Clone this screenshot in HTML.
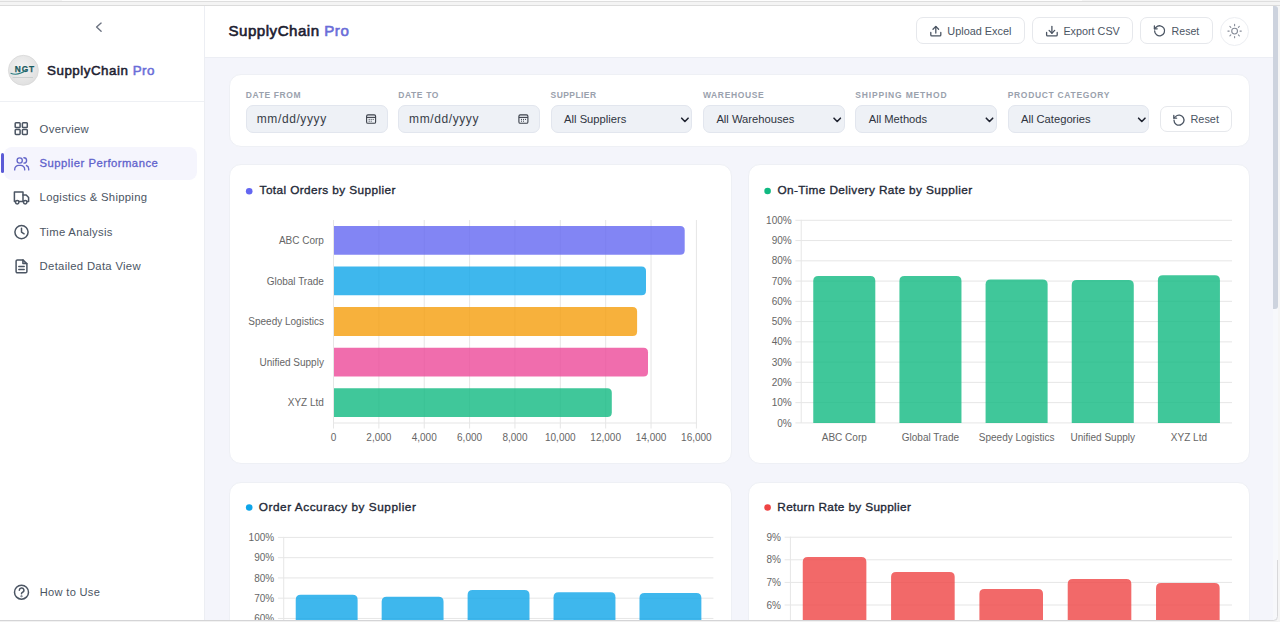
<!DOCTYPE html>
<html><head><meta charset="utf-8">
<style>
*{margin:0;padding:0;box-sizing:border-box}
html,body{width:1280px;height:622px;overflow:hidden;background:#fff}
body{position:relative;font-family:"Liberation Sans",sans-serif;color:#1f2330}
.a{position:absolute}
.t{position:absolute;line-height:1;white-space:nowrap}
svg.o{position:absolute;left:0;top:0;width:1280px;height:622px;overflow:visible}
</style></head><body>
<div class="a" style="left:0px;top:0px;width:1280px;height:6px;background:#f4f4f4;"></div>
<div class="a" style="left:0px;top:5px;width:1280px;height:1px;background:#dcdcdc;"></div>
<div class="a" style="left:0px;top:1px;width:1280px;height:1px;background:#dedede;"></div>
<div class="a" style="left:62px;top:0px;width:1020px;height:1px;background:#fdfdfd;"></div>
<div class="a" style="left:205px;top:57px;width:1068px;height:563px;background:#f4f5fb;"></div>
<div class="a" style="left:0px;top:6px;width:205px;height:614px;background:#fff;border-right:1px solid #eceef3;"></div>
<div class="a" style="left:0px;top:101px;width:204px;height:1px;background:#eef0f4;"></div>
<div class="a" style="left:205px;top:6px;width:1068px;height:52px;background:#fff;border-bottom:1px solid #eceef4;"></div>
<div class="a" style="left:1273px;top:6px;width:7px;height:614px;background:#f7f8fb;"></div>
<div class="a" style="left:1273px;top:6px;width:5px;height:303px;background:#cdd3de;border-radius:0 3px 3px 0;"></div>
<svg class="o"><path d="M101.1 23.1 L96.6 27.1 L101.1 31.2" fill="none" stroke="#6b7280" stroke-width="1.4" stroke-linecap="round" stroke-linejoin="round"/></svg>
<svg class="o"><defs><radialGradient id="lg" cx="0.45" cy="0.4" r="0.6"><stop offset="0" stop-color="#f3f3f3"/><stop offset="1" stop-color="#e0e0e0"/></radialGradient></defs>
<circle cx="23.4" cy="70.3" r="15" fill="url(#lg)" stroke="#d6d6d6" stroke-width="0.7"/>
<text x="14.7" y="72.3" font-family="Liberation Sans" font-weight="700" font-size="8.3" fill="#1b5a5e" textLength="19.5" lengthAdjust="spacing" stroke="#1b5a5e" stroke-width="0.25">NGT</text>
<path d="M10.6 73.2 Q17.5 76.2 25.5 70.6" fill="none" stroke="#2c7d80" stroke-width="1.2"/>
<rect x="12.6" y="77.2" width="20.4" height="0.6" fill="#b9c2c2"/>
</svg>
<div class="t" style="left:47.00px;top:64.06px;font-size:13.4px;color:#1c2030;font-weight:400;letter-spacing:0.5px;-webkit-text-stroke:0.5px #1c2030;">SupplyChain <span style="color:#6a6dd8;-webkit-text-stroke:0.5px #6a6dd8">Pro</span></div>
<div class="a" style="left:3.5px;top:146.5px;width:193px;height:33px;background:#f5f5fd;border-radius:8px;"></div>
<div class="a" style="left:1px;top:153px;width:2.5px;height:20px;background:#5b5bd6;border-radius:2px;"></div>
<div class="t" style="left:39.60px;top:123.73px;font-size:11.3px;color:#4b5563;font-weight:400;letter-spacing:0.3px;">Overview</div>
<div class="t" style="left:39.60px;top:157.73px;font-size:11.3px;color:#5f62cc;font-weight:400;letter-spacing:0.47px;-webkit-text-stroke:0.3px #5f62cc;">Supplier Performance</div>
<div class="t" style="left:39.60px;top:192.33px;font-size:11.3px;color:#4b5563;font-weight:400;letter-spacing:0.3px;">Logistics &amp; Shipping</div>
<div class="t" style="left:39.60px;top:226.73px;font-size:11.3px;color:#4b5563;font-weight:400;letter-spacing:0.3px;">Time Analysis</div>
<div class="t" style="left:39.60px;top:261.03px;font-size:11.3px;color:#4b5563;font-weight:400;letter-spacing:0.3px;">Detailed Data View</div>
<svg class="o" fill="none" stroke="#4b5563" stroke-width="1.5" stroke-linecap="round" stroke-linejoin="round">
<rect x="15.2" y="122.7" width="4.9" height="4.9" rx="0.8"/><rect x="22.4" y="122.7" width="4.9" height="4.9" rx="0.8"/>
<rect x="15.2" y="129.5" width="4.9" height="4.9" rx="0.8"/><rect x="22.4" y="129.5" width="4.9" height="4.9" rx="0.8"/>
</svg>
<svg class="o" fill="none" stroke="#6467c9" stroke-width="1.35" stroke-linecap="round" stroke-linejoin="round">
<circle cx="19.7" cy="160.5" r="2.6"/><path d="M14.7 169.9 v-0.4 a4.1 4.1 0 0 1 4.1 -4.1 h1.8 a4.1 4.1 0 0 1 4.1 4.1 v0.4"/>
<path d="M23.9 157.7 a2.7 2.7 0 0 1 0 5.4"/><path d="M26.4 165.5 a3.6 3.6 0 0 1 2.3 3.4 v1"/>
</svg>
<svg class="o" fill="none" stroke="#4b5563" stroke-width="1.5" stroke-linecap="round" stroke-linejoin="round">
<path d="M14.4 192 h8.6 v9.4 h-8.6 z"/><path d="M23 195 h3.2 l2.4 2.6 v3.8 h-5.6"/>
<circle cx="17.2" cy="202.3" r="1.7" fill="#fff"/><circle cx="25.2" cy="202.3" r="1.7" fill="#fff"/>
</svg>
<svg class="o" fill="none" stroke="#4b5563" stroke-width="1.5" stroke-linecap="round" stroke-linejoin="round">
<circle cx="21.5" cy="232.1" r="6.6"/><path d="M21.5 228.3 v3.9 l2.6 1.6"/>
</svg>
<svg class="o" fill="none" stroke="#4b5563" stroke-width="1.5" stroke-linecap="round" stroke-linejoin="round">
<path d="M16.1 261.2 a1.3 1.3 0 0 1 1.3 -1.3 h5.5 l4 4 v7.6 a1.3 1.3 0 0 1 -1.3 1.3 h-8.2 a1.3 1.3 0 0 1 -1.3 -1.3 z"/>
<path d="M22.9 259.9 v3.6 h3.9"/><path d="M18.8 266.6 h5.4"/><path d="M18.8 269.4 h5.4"/>
</svg>
<svg class="o" fill="none" stroke="#4b5563" stroke-width="1.5" stroke-linecap="round" stroke-linejoin="round">
<circle cx="21.5" cy="592.2" r="7.0"/><path d="M19.3 590.2 a2.3 2.3 0 1 1 3.3 2.1 c-0.7 0.3 -1.1 0.8 -1.1 1.5"/>
<circle cx="21.5" cy="596.2" r="0.3" fill="#4b5563"/>
</svg>
<div class="t" style="left:39.80px;top:586.80px;font-size:11.1px;color:#4b5563;font-weight:400;letter-spacing:0.3px;">How to Use</div>
<div class="t" style="left:228.50px;top:22.72px;font-size:15.1px;color:#1c2030;font-weight:400;letter-spacing:0.5px;-webkit-text-stroke:0.6px #1c2030;">SupplyChain <span style="color:#6a6dd8;-webkit-text-stroke:0.6px #6a6dd8">Pro</span></div>
<div class="a" style="left:916.4px;top:17.3px;width:109px;height:27px;background:#fff;border:1px solid #e6e8ec;border-radius:7px;"></div>
<div class="a" style="left:1032.3px;top:17.3px;width:101px;height:27px;background:#fff;border:1px solid #e6e8ec;border-radius:7px;"></div>
<div class="a" style="left:1140.4px;top:17.3px;width:72.3px;height:27px;background:#fff;border:1px solid #e6e8ec;border-radius:7px;"></div>
<div class="a" style="left:1220px;top:16.6px;width:29.3px;height:29px;background:#fff;border:1px solid #eceef2;border-radius:15px;"></div>
<div class="t" style="left:947.30px;top:25.57px;font-size:10.9px;color:#4b5563;font-weight:400;">Upload Excel</div>
<div class="t" style="left:1063.40px;top:25.66px;font-size:10.8px;color:#4b5563;font-weight:400;">Export CSV</div>
<div class="t" style="left:1171.60px;top:25.83px;font-size:10.6px;color:#4b5563;font-weight:400;">Reset</div>
<svg class="o" fill="none" stroke="#4b5563" stroke-width="1.3" stroke-linecap="round" stroke-linejoin="round">
<path d="M930.8 32.5 v2.4 a1 1 0 0 0 1 1 h8 a1 1 0 0 0 1 -1 v-2.4"/><path d="M935.8 33 v-6.4"/><path d="M933 29.2 l2.8 -2.8 l2.8 2.8"/>
<path d="M1046.6 32.5 v2.4 a1 1 0 0 0 1 1 h8.6 a1 1 0 0 0 1 -1 v-2.4"/><path d="M1051.9 26.4 v6.6"/><path d="M1049.1 30.4 l2.8 2.8 l2.8 -2.8"/>
<path d="M1154.6 30.8 a5 5 0 1 0 1.5 -3.6 l-1.6 1.5"/><path d="M1154.4 26 v2.8 h2.8"/>
</svg>
<svg class="o" fill="none" stroke="#868c98" stroke-width="1.1" stroke-linecap="round">
<circle cx="1234.6" cy="31.1" r="2.9"/>
<path d="M1234.6 24.4 v1.3 M1234.6 36.5 v1.3 M1227.9 31.1 h1.3 M1240 31.1 h1.3 M1229.9 26.4 l0.9 0.9 M1238.4 34.9 l0.9 0.9 M1229.9 35.8 l0.9 -0.9 M1238.4 27.3 l0.9 -0.9"/>
</svg>
<div class="a" style="left:229px;top:74.3px;width:1020.5px;height:73px;background:#fff;border-radius:12px;border:1px solid #eef0f5;"></div>
<div class="t" style="left:245.80px;top:91.40px;font-size:8.5px;color:#9aa1ad;font-weight:700;letter-spacing:0.62px;">DATE FROM</div>
<div class="a" style="left:246.0px;top:105.2px;width:141.7px;height:28.2px;background:#eef1f6;border:1px solid #e2e6ee;border-radius:7px;"></div>
<div class="t" style="left:256.75px;top:112.84px;font-size:12px;color:#383d48;font-weight:400;letter-spacing:0.6px;">mm/dd/yyyy</div>
<svg class="o" fill="none" stroke="#3b404a" stroke-width="1.1"><rect x="366.60" y="114.9" width="9" height="8.4" rx="1.4"/><path d="M366.60 117.4 h9"/><path d="M368.70 119.4 h1 M370.70 119.4 h1 M372.70 119.4 h1 M368.70 121.2 h1 M370.70 121.2 h1" stroke-width="1"/></svg>
<div class="t" style="left:398.18px;top:91.40px;font-size:8.5px;color:#9aa1ad;font-weight:700;letter-spacing:0.62px;">DATE TO</div>
<div class="a" style="left:398.3px;top:105.2px;width:141.7px;height:28.2px;background:#eef1f6;border:1px solid #e2e6ee;border-radius:7px;"></div>
<div class="t" style="left:409.05px;top:112.84px;font-size:12px;color:#383d48;font-weight:400;letter-spacing:0.6px;">mm/dd/yyyy</div>
<svg class="o" fill="none" stroke="#3b404a" stroke-width="1.1"><rect x="518.90" y="114.9" width="9" height="8.4" rx="1.4"/><path d="M518.90 117.4 h9"/><path d="M521.00 119.4 h1 M523.00 119.4 h1 M525.00 119.4 h1 M521.00 121.2 h1 M523.00 121.2 h1" stroke-width="1"/></svg>
<div class="t" style="left:550.56px;top:91.40px;font-size:8.5px;color:#9aa1ad;font-weight:700;letter-spacing:0.43px;">SUPPLIER</div>
<div class="a" style="left:550.6px;top:105.2px;width:141.7px;height:28.2px;background:#eef1f6;border:1px solid #e2e6ee;border-radius:7px;"></div>
<div class="t" style="left:564.10px;top:114.02px;font-size:11.2px;color:#2f3440;font-weight:400;">All Suppliers</div>
<svg class="o" fill="none" stroke="#1f2330" stroke-width="1.6" stroke-linecap="round" stroke-linejoin="round"><path d="M681.70 118.2 l3.2 3.3 l3.2 -3.3"/></svg>
<div class="t" style="left:702.94px;top:91.40px;font-size:8.5px;color:#9aa1ad;font-weight:700;letter-spacing:0.62px;">WAREHOUSE</div>
<div class="a" style="left:702.9px;top:105.2px;width:141.7px;height:28.2px;background:#eef1f6;border:1px solid #e2e6ee;border-radius:7px;"></div>
<div class="t" style="left:716.40px;top:114.02px;font-size:11.2px;color:#2f3440;font-weight:400;">All Warehouses</div>
<svg class="o" fill="none" stroke="#1f2330" stroke-width="1.6" stroke-linecap="round" stroke-linejoin="round"><path d="M834.00 118.2 l3.2 3.3 l3.2 -3.3"/></svg>
<div class="t" style="left:855.32px;top:91.40px;font-size:8.5px;color:#9aa1ad;font-weight:700;letter-spacing:0.82px;">SHIPPING METHOD</div>
<div class="a" style="left:855.2px;top:105.2px;width:141.7px;height:28.2px;background:#eef1f6;border:1px solid #e2e6ee;border-radius:7px;"></div>
<div class="t" style="left:868.70px;top:114.02px;font-size:11.2px;color:#2f3440;font-weight:400;">All Methods</div>
<svg class="o" fill="none" stroke="#1f2330" stroke-width="1.6" stroke-linecap="round" stroke-linejoin="round"><path d="M986.30 118.2 l3.2 3.3 l3.2 -3.3"/></svg>
<div class="t" style="left:1007.70px;top:91.40px;font-size:8.5px;color:#9aa1ad;font-weight:700;letter-spacing:0.68px;">PRODUCT CATEGORY</div>
<div class="a" style="left:1007.5px;top:105.2px;width:141.7px;height:28.2px;background:#eef1f6;border:1px solid #e2e6ee;border-radius:7px;"></div>
<div class="t" style="left:1021.00px;top:114.02px;font-size:11.2px;color:#2f3440;font-weight:400;">All Categories</div>
<svg class="o" fill="none" stroke="#1f2330" stroke-width="1.6" stroke-linecap="round" stroke-linejoin="round"><path d="M1138.60 118.2 l3.2 3.3 l3.2 -3.3"/></svg>
<div class="a" style="left:1160px;top:106.2px;width:72px;height:26.1px;background:#fff;border:1px solid #e6e8ec;border-radius:7px;"></div>
<div class="t" style="left:1190.50px;top:113.77px;font-size:10.9px;color:#4b5563;font-weight:400;">Reset</div>
<svg class="o" fill="none" stroke="#4b5563" stroke-width="1.3" stroke-linecap="round" stroke-linejoin="round">
<path d="M1174 120.2 a5 5 0 1 0 1.5 -3.6 l-1.6 1.5"/><path d="M1173.8 115.4 v2.8 h2.8"/>
</svg>
<div class="a" style="left:229px;top:164px;width:503px;height:299.5px;background:#fff;border-radius:12px;border:1px solid #eef0f5;"></div>
<div class="a" style="left:748px;top:164px;width:501.5px;height:299.5px;background:#fff;border-radius:12px;border:1px solid #eef0f5;"></div>
<div class="a" style="left:229px;top:481.5px;width:503px;height:160px;background:#fff;border-radius:12px;border:1px solid #eef0f5;"></div>
<div class="a" style="left:748px;top:481.5px;width:501.5px;height:160px;background:#fff;border-radius:12px;border:1px solid #eef0f5;"></div>
<svg class="o"><circle cx="249.2" cy="191.2" r="3.3" fill="#6366f1"/></svg>
<div class="t" style="left:259.60px;top:184.81px;font-size:11.8px;color:#1f2937;font-weight:400;letter-spacing:0.4px;-webkit-text-stroke:0.35px #1f2937;">Total Orders by Supplier</div>
<svg class="o"><circle cx="767.6" cy="191.0" r="3.3" fill="#10b981"/></svg>
<div class="t" style="left:777.50px;top:184.81px;font-size:11.8px;color:#1f2937;font-weight:400;letter-spacing:0.4px;-webkit-text-stroke:0.35px #1f2937;">On-Time Delivery Rate by Supplier</div>
<svg class="o"><circle cx="249.2" cy="507.5" r="3.3" fill="#0ea5e9"/></svg>
<div class="t" style="left:258.80px;top:501.81px;font-size:11.8px;color:#1f2937;font-weight:400;letter-spacing:0.54px;-webkit-text-stroke:0.35px #1f2937;">Order Accuracy by Supplier</div>
<svg class="o"><circle cx="767.6" cy="507.5" r="3.3" fill="#ef4444"/></svg>
<div class="t" style="left:777.30px;top:501.81px;font-size:11.8px;color:#1f2937;font-weight:400;letter-spacing:0.35px;-webkit-text-stroke:0.35px #1f2937;">Return Rate by Supplier</div>
<svg class="o">
<rect x="333.00" y="220.00" width="1" height="208.50" fill="#e6e6e6"/>
<text x="333.50" y="440.7" text-anchor="middle" font-family="Liberation Sans" font-size="10" fill="#666">0</text>
<rect x="378.36" y="220.00" width="1" height="208.50" fill="#e6e6e6"/>
<text x="378.86" y="440.7" text-anchor="middle" font-family="Liberation Sans" font-size="10" fill="#666">2,000</text>
<rect x="423.73" y="220.00" width="1" height="208.50" fill="#e6e6e6"/>
<text x="424.23" y="440.7" text-anchor="middle" font-family="Liberation Sans" font-size="10" fill="#666">4,000</text>
<rect x="469.09" y="220.00" width="1" height="208.50" fill="#e6e6e6"/>
<text x="469.59" y="440.7" text-anchor="middle" font-family="Liberation Sans" font-size="10" fill="#666">6,000</text>
<rect x="514.45" y="220.00" width="1" height="208.50" fill="#e6e6e6"/>
<text x="514.95" y="440.7" text-anchor="middle" font-family="Liberation Sans" font-size="10" fill="#666">8,000</text>
<rect x="559.81" y="220.00" width="1" height="208.50" fill="#e6e6e6"/>
<text x="560.31" y="440.7" text-anchor="middle" font-family="Liberation Sans" font-size="10" fill="#666">10,000</text>
<rect x="605.17" y="220.00" width="1" height="208.50" fill="#e6e6e6"/>
<text x="605.67" y="440.7" text-anchor="middle" font-family="Liberation Sans" font-size="10" fill="#666">12,000</text>
<rect x="650.54" y="220.00" width="1" height="208.50" fill="#e6e6e6"/>
<text x="651.04" y="440.7" text-anchor="middle" font-family="Liberation Sans" font-size="10" fill="#666">14,000</text>
<rect x="695.90" y="220.00" width="1" height="208.50" fill="#e6e6e6"/>
<text x="696.40" y="440.7" text-anchor="middle" font-family="Liberation Sans" font-size="10" fill="#666">16,000</text>
<rect x="333.00" y="422.50" width="363.40" height="1" fill="#e6e6e6"/>
<path d="M334.00 225.90 H680.20 Q684.70 225.90 684.70 230.40 V250.20 Q684.70 254.70 680.20 254.70 H334.00 Z" fill="rgba(99,102,241,0.8)"/>
<text x="323.9" y="243.90" text-anchor="end" font-family="Liberation Sans" font-size="10" fill="#666">ABC Corp</text>
<path d="M334.00 266.50 H641.50 Q646.00 266.50 646.00 271.00 V290.80 Q646.00 295.30 641.50 295.30 H334.00 Z" fill="rgba(14,165,233,0.8)"/>
<text x="323.9" y="284.50" text-anchor="end" font-family="Liberation Sans" font-size="10" fill="#666">Global Trade</text>
<path d="M334.00 307.10 H632.60 Q637.10 307.10 637.10 311.60 V331.40 Q637.10 335.90 632.60 335.90 H334.00 Z" fill="rgba(245,158,11,0.8)"/>
<text x="323.9" y="325.10" text-anchor="end" font-family="Liberation Sans" font-size="10" fill="#666">Speedy Logistics</text>
<path d="M334.00 347.70 H643.50 Q648.00 347.70 648.00 352.20 V372.00 Q648.00 376.50 643.50 376.50 H334.00 Z" fill="rgba(236,72,153,0.8)"/>
<text x="323.9" y="365.70" text-anchor="end" font-family="Liberation Sans" font-size="10" fill="#666">Unified Supply</text>
<path d="M334.00 388.30 H607.30 Q611.80 388.30 611.80 392.80 V412.60 Q611.80 417.10 607.30 417.10 H334.00 Z" fill="rgba(16,185,129,0.8)"/>
<text x="323.9" y="406.30" text-anchor="end" font-family="Liberation Sans" font-size="10" fill="#666">XYZ Ltd</text>
</svg>
<svg class="o">
<rect x="795.40" y="219.80" width="436.60" height="1" fill="#e6e6e6"/>
<text x="791.70" y="223.90" text-anchor="end" font-family="Liberation Sans" font-size="10" fill="#666">100%</text>
<rect x="795.40" y="240.06" width="436.60" height="1" fill="#e6e6e6"/>
<text x="791.70" y="244.16" text-anchor="end" font-family="Liberation Sans" font-size="10" fill="#666">90%</text>
<rect x="795.40" y="260.32" width="436.60" height="1" fill="#e6e6e6"/>
<text x="791.70" y="264.42" text-anchor="end" font-family="Liberation Sans" font-size="10" fill="#666">80%</text>
<rect x="795.40" y="280.58" width="436.60" height="1" fill="#e6e6e6"/>
<text x="791.70" y="284.68" text-anchor="end" font-family="Liberation Sans" font-size="10" fill="#666">70%</text>
<rect x="795.40" y="300.84" width="436.60" height="1" fill="#e6e6e6"/>
<text x="791.70" y="304.94" text-anchor="end" font-family="Liberation Sans" font-size="10" fill="#666">60%</text>
<rect x="795.40" y="321.10" width="436.60" height="1" fill="#e6e6e6"/>
<text x="791.70" y="325.20" text-anchor="end" font-family="Liberation Sans" font-size="10" fill="#666">50%</text>
<rect x="795.40" y="341.36" width="436.60" height="1" fill="#e6e6e6"/>
<text x="791.70" y="345.46" text-anchor="end" font-family="Liberation Sans" font-size="10" fill="#666">40%</text>
<rect x="795.40" y="361.62" width="436.60" height="1" fill="#e6e6e6"/>
<text x="791.70" y="365.72" text-anchor="end" font-family="Liberation Sans" font-size="10" fill="#666">30%</text>
<rect x="795.40" y="381.88" width="436.60" height="1" fill="#e6e6e6"/>
<text x="791.70" y="385.98" text-anchor="end" font-family="Liberation Sans" font-size="10" fill="#666">20%</text>
<rect x="795.40" y="402.14" width="436.60" height="1" fill="#e6e6e6"/>
<text x="791.70" y="406.24" text-anchor="end" font-family="Liberation Sans" font-size="10" fill="#666">10%</text>
<rect x="795.40" y="422.40" width="436.60" height="1" fill="#e6e6e6"/>
<text x="791.70" y="426.50" text-anchor="end" font-family="Liberation Sans" font-size="10" fill="#666">0%</text>
<rect x="800.70" y="219.80" width="1" height="203.10" fill="#e6e6e6"/>
<path d="M813.26 422.90 V281.00 Q813.26 276.00 818.26 276.00 H870.30 Q875.30 276.00 875.30 281.00 V422.90 Z" fill="rgba(16,185,129,0.8)"/>
<text x="844.28" y="440.9" text-anchor="middle" font-family="Liberation Sans" font-size="10" fill="#666">ABC Corp</text>
<path d="M899.42 422.90 V280.90 Q899.42 275.90 904.42 275.90 H956.46 Q961.46 275.90 961.46 280.90 V422.90 Z" fill="rgba(16,185,129,0.8)"/>
<text x="930.44" y="440.9" text-anchor="middle" font-family="Liberation Sans" font-size="10" fill="#666">Global Trade</text>
<path d="M985.58 422.90 V284.50 Q985.58 279.50 990.58 279.50 H1042.62 Q1047.62 279.50 1047.62 284.50 V422.90 Z" fill="rgba(16,185,129,0.8)"/>
<text x="1016.60" y="440.9" text-anchor="middle" font-family="Liberation Sans" font-size="10" fill="#666">Speedy Logistics</text>
<path d="M1071.74 422.90 V284.90 Q1071.74 279.90 1076.74 279.90 H1128.78 Q1133.78 279.90 1133.78 284.90 V422.90 Z" fill="rgba(16,185,129,0.8)"/>
<text x="1102.76" y="440.9" text-anchor="middle" font-family="Liberation Sans" font-size="10" fill="#666">Unified Supply</text>
<path d="M1157.90 422.90 V280.20 Q1157.90 275.20 1162.90 275.20 H1214.94 Q1219.94 275.20 1219.94 280.20 V422.90 Z" fill="rgba(16,185,129,0.8)"/>
<text x="1188.92" y="440.9" text-anchor="middle" font-family="Liberation Sans" font-size="10" fill="#666">XYZ Ltd</text>
</svg>
<svg class="o">
<rect x="277.90" y="536.90" width="435.50" height="1" fill="#e6e6e6"/>
<text x="274.20" y="541.00" text-anchor="end" font-family="Liberation Sans" font-size="10" fill="#666">100%</text>
<rect x="277.90" y="557.16" width="435.50" height="1" fill="#e6e6e6"/>
<text x="274.20" y="561.26" text-anchor="end" font-family="Liberation Sans" font-size="10" fill="#666">90%</text>
<rect x="277.90" y="577.42" width="435.50" height="1" fill="#e6e6e6"/>
<text x="274.20" y="581.52" text-anchor="end" font-family="Liberation Sans" font-size="10" fill="#666">80%</text>
<rect x="277.90" y="597.68" width="435.50" height="1" fill="#e6e6e6"/>
<text x="274.20" y="601.78" text-anchor="end" font-family="Liberation Sans" font-size="10" fill="#666">70%</text>
<rect x="277.90" y="617.94" width="435.50" height="1" fill="#e6e6e6"/>
<text x="274.20" y="622.04" text-anchor="end" font-family="Liberation Sans" font-size="10" fill="#666">60%</text>
<rect x="283.20" y="536.90" width="1" height="93.10" fill="#e6e6e6"/>
<path d="M295.73 630.00 V599.80 Q295.73 594.80 300.73 594.80 H352.61 Q357.61 594.80 357.61 599.80 V630.00 Z" fill="rgba(14,165,233,0.8)"/>
<path d="M381.67 630.00 V601.80 Q381.67 596.80 386.67 596.80 H438.55 Q443.55 596.80 443.55 601.80 V630.00 Z" fill="rgba(14,165,233,0.8)"/>
<path d="M467.61 630.00 V594.90 Q467.61 589.90 472.61 589.90 H524.49 Q529.49 589.90 529.49 594.90 V630.00 Z" fill="rgba(14,165,233,0.8)"/>
<path d="M553.55 630.00 V597.30 Q553.55 592.30 558.55 592.30 H610.43 Q615.43 592.30 615.43 597.30 V630.00 Z" fill="rgba(14,165,233,0.8)"/>
<path d="M639.49 630.00 V598.10 Q639.49 593.10 644.49 593.10 H696.37 Q701.37 593.10 701.37 598.10 V630.00 Z" fill="rgba(14,165,233,0.8)"/>
</svg>
<svg class="o">
<rect x="784.60" y="536.70" width="447.40" height="1" fill="#e6e6e6"/>
<text x="780.90" y="540.80" text-anchor="end" font-family="Liberation Sans" font-size="10" fill="#666">9%</text>
<rect x="784.60" y="559.30" width="447.40" height="1" fill="#e6e6e6"/>
<text x="780.90" y="563.40" text-anchor="end" font-family="Liberation Sans" font-size="10" fill="#666">8%</text>
<rect x="784.60" y="581.90" width="447.40" height="1" fill="#e6e6e6"/>
<text x="780.90" y="586.00" text-anchor="end" font-family="Liberation Sans" font-size="10" fill="#666">7%</text>
<rect x="784.60" y="604.50" width="447.40" height="1" fill="#e6e6e6"/>
<text x="780.90" y="608.60" text-anchor="end" font-family="Liberation Sans" font-size="10" fill="#666">6%</text>
<rect x="789.90" y="536.70" width="1" height="93.30" fill="#e6e6e6"/>
<path d="M802.76 630.00 V562.10 Q802.76 557.10 807.76 557.10 H861.36 Q866.36 557.10 866.36 562.10 V630.00 Z" fill="rgba(239,68,68,0.8)"/>
<path d="M891.08 630.00 V577.10 Q891.08 572.10 896.08 572.10 H949.68 Q954.68 572.10 954.68 577.10 V630.00 Z" fill="rgba(239,68,68,0.8)"/>
<path d="M979.40 630.00 V593.90 Q979.40 588.90 984.40 588.90 H1038.00 Q1043.00 588.90 1043.00 593.90 V630.00 Z" fill="rgba(239,68,68,0.8)"/>
<path d="M1067.72 630.00 V584.00 Q1067.72 579.00 1072.72 579.00 H1126.32 Q1131.32 579.00 1131.32 584.00 V630.00 Z" fill="rgba(239,68,68,0.8)"/>
<path d="M1156.04 630.00 V588.00 Q1156.04 583.00 1161.04 583.00 H1214.64 Q1219.64 583.00 1219.64 588.00 V630.00 Z" fill="rgba(239,68,68,0.8)"/>
</svg>
<div class="a" style="left:0;top:620px;width:1274px;height:1px;background:#d4d4d6"></div>
<div class="a" style="left:0;top:621px;width:1280px;height:1px;background:#f2f2f2"></div>
<svg class="o"><path d="M1278 6 V622 H1280 V6 Z" fill="#f5f5f5"/><path d="M1273 622 V620.5 Q1277.5 620.5 1277.5 616 V622 Z" fill="#f2f2f2"/><path d="M1270 620.5 H1273.5 Q1277.5 620.5 1277.5 616.5 V560" fill="none" stroke="#d8d8da" stroke-width="1"/></svg>
</body></html>
